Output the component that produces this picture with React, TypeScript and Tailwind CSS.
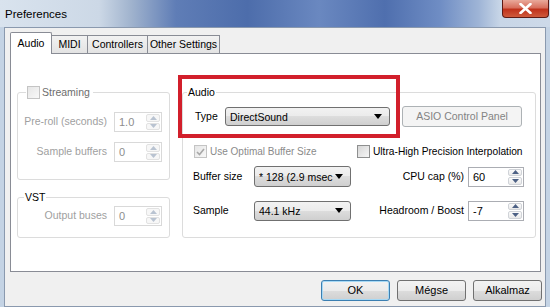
import React from "react";

const SEG = "font-['Liberation_Sans','Arial',sans-serif]";
const TAH = "font-['Liberation_Sans','Arial',sans-serif]";

function UpTri({ color }: { color: string }) {
  return (
    <svg width="7" height="4" viewBox="0 0 7 4">
      <path d="M0 4 L3.5 0 L7 4 Z" fill={color} />
    </svg>
  );
}
function DownTri({ color }: { color: string }) {
  return (
    <svg width="7" height="4" viewBox="0 0 7 4">
      <path d="M0 0 L3.5 4 L7 0 Z" fill={color} />
    </svg>
  );
}

function SpinBox({
  value,
  disabled,
  w,
}: {
  value: string;
  disabled?: boolean;
  w: string;
}) {
  const arrow = disabled ? "#b9c3d1" : "#4d6185";
  return (
    <div
      className={`flex shrink-0 h-[20px] ${w} bg-white border ${
        disabled ? "border-[#d9d9d9]" : "border-[#abadb3]"
      }`}
    >
      <div
        className={`flex-1 pl-[4px] text-[11px] leading-[18px] ${SEG} ${
          disabled ? "text-[#8d8d8d]" : "text-[#000]"
        }`}
      >
        {value}
      </div>
      <div className="flex flex-col w-[16px] p-[1px] gap-[1px]">
        <div
          className={`flex-1 flex items-center justify-center rounded-[2px] border ${
            disabled
              ? "border-[#e2e2e2] bg-[#f7f7f7]"
              : "border-[#d0d3d8] bg-gradient-to-b from-[#fbfbfb] to-[#eaeaea]"
          }`}
        >
          <UpTri color={arrow} />
        </div>
        <div
          className={`flex-1 flex items-center justify-center rounded-[2px] border ${
            disabled
              ? "border-[#e2e2e2] bg-[#f7f7f7]"
              : "border-[#d0d3d8] bg-gradient-to-b from-[#fbfbfb] to-[#eaeaea]"
          }`}
        >
          <DownTri color={arrow} />
        </div>
      </div>
    </div>
  );
}

function Combo({ value, w, h }: { value: string; w: string; h: string }) {
  return (
    <div
      className={`flex shrink-0 items-center ${w} ${h} rounded-[3px] border border-[#707070] bg-[linear-gradient(to_bottom,#f2f2f2_0%,#ebebeb_50%,#dddddd_50%,#cfcfcf_100%)] pl-[4px] pr-[7px] overflow-hidden`}
    >
      <span
        className={`flex-1 whitespace-nowrap overflow-hidden text-[10.5px] leading-[14px] text-black ${SEG}`}
      >
        {value}
      </span>
      <svg width="8" height="5" viewBox="0 0 8 5" className="shrink-0 ml-[2px]">
        <path d="M0 0 L8 0 L4 5 Z" fill="#000" />
      </svg>
    </div>
  );
}

function CheckBox({ checked, disabled }: { checked?: boolean; disabled?: boolean }) {
  return (
    <div
      className={`w-[13px] h-[13px] shrink-0 border flex items-center justify-center ${
        disabled
          ? "border-[#c4c4c4] bg-[linear-gradient(135deg,#e6e6e6,#f8f8f8)]"
          : "border-[#8e8f8f] bg-[linear-gradient(135deg,#d6d6d6,#f6f6f6)]"
      }`}
    >
      {checked && (
        <svg width="9" height="8" viewBox="0 0 9 8">
          <path d="M1 4 L3.5 6.5 L8 1" stroke="#a8a8a8" strokeWidth="1.6" fill="none" />
        </svg>
      )}
    </div>
  );
}

function Button({
  label,
  w,
  focused,
}: {
  label: string;
  w: string;
  focused?: boolean;
}) {
  return (
    <div
      className={`flex shrink-0 items-center justify-center ${w} h-[21px] rounded-[3px] border ${
        focused ? "border-[#3c7fb1] shadow-[inset_0_0_0_1px_#a7d9f5]" : "border-[#707070]"
      } bg-[linear-gradient(to_bottom,#f2f2f2_0%,#ebebeb_50%,#dddddd_50%,#cfcfcf_100%)] text-[11px] text-black ${SEG}`}
    >
      {label}
    </div>
  );
}

export default function App() {
  return (
    <div className="w-[550px] h-[307px] overflow-hidden flex flex-col bg-[#c4d3e4] relative">
      {/* Title bar */}
      <div className="h-[27px] shrink-0 flex items-start bg-[linear-gradient(to_right,#d9e3ee_0%,#ccd8e6_18%,#9fb2cd_24%,#5f7db6_32%,#4d6dab_45%,#6a88c0_58%,#4f6fae_70%,#6f8dc4_80%,#9eb4d6_87%,#c8d6e7_91%,#cdd9e8_100%)]">
        <div className={`pl-[5px] pt-[7px] text-[11.5px] leading-[14px] text-black ${SEG} flex-1`}>
          Preferences
        </div>
        <div className="w-[47px] h-[18px] mr-[1px] rounded-b-[4px] border border-[#5e1a14] border-t-0 bg-[linear-gradient(to_bottom,#e9a99b_0%,#d8705e_45%,#c0321c_55%,#cf5a3c_100%)] flex items-center justify-center">
          <svg width="13" height="11" viewBox="0 0 13 11">
            <path
              d="M1.5 1 L11.5 10 M11.5 1 L1.5 10"
              stroke="#fff"
              strokeWidth="2.6"
              strokeLinecap="round"
            />
          </svg>
        </div>
      </div>

      {/* Client area */}
      <div className="flex-1 mx-[4px] bg-[#f0f0f0] border border-[#8a99ae] flex flex-col pl-[5px] pr-[3px] pt-[5px]">
        {/* Tabs */}
        <div className={`flex items-end h-[21px] text-[10.5px] text-black ${TAH} relative z-10`}>
          <div className="h-[22px] w-[42px] bg-white border border-[#898c95] border-b-0 flex items-start justify-center pt-[3px] rounded-t-[2px]">
            Audio
          </div>
          <div className="h-[19px] w-[36px] bg-[linear-gradient(to_bottom,#f2f2f2,#e3e3e3)] border border-[#898c95] border-l-0 flex items-center justify-center">
            MIDI
          </div>
          <div className="h-[19px] w-[60px] bg-[linear-gradient(to_bottom,#f2f2f2,#e3e3e3)] border border-[#898c95] border-l-0 flex items-center justify-center">
            Controllers
          </div>
          <div className="h-[19px] w-[72px] bg-[linear-gradient(to_bottom,#f2f2f2,#e3e3e3)] border border-[#898c95] border-l-0 flex items-center justify-center">
            Other Settings
          </div>
        </div>

        {/* Tab panel */}
        <div className="w-[531px] h-[219px] shrink-0 -mt-[1px] bg-white border border-[#898c95] flex pl-[6px] pt-[31px] gap-[12px]">
          {/* Left column */}
          <div className="w-[153px] shrink-0 flex flex-col gap-[10px]">
            <fieldset className="border border-[#dcdcdc] rounded-[3px] px-0 pt-[13px] pb-[17px] m-0 min-w-0">
              <legend className="ml-[8px] px-[1px] flex items-center gap-[2px] h-[14px]">
                <CheckBox disabled />
                <span className={`text-[10.5px] leading-[14px] text-[#6d6d6d] ${TAH} pr-[2px]`}>
                  Streaming
                </span>
              </legend>
              <div className="flex flex-col gap-[10px] pr-[7px]">
                <div className="flex items-center justify-end gap-[7px]">
                  <span className={`text-[10.5px] text-[#a0a0a0] ${SEG} whitespace-nowrap`}>
                    Pre-roll (seconds)
                  </span>
                  <SpinBox value="1.0" disabled w="w-[48px]" />
                </div>
                <div className="flex items-center justify-end gap-[7px]">
                  <span className={`text-[10.5px] text-[#a0a0a0] ${SEG} whitespace-nowrap`}>
                    Sample buffers
                  </span>
                  <SpinBox value="0" disabled w="w-[48px]" />
                </div>
              </div>
            </fieldset>
            <fieldset className="border border-[#dcdcdc] rounded-[3px] pt-[2px] pb-[11px] m-0 min-w-0">
              <legend className={`ml-[6px] px-[1px] text-[10.5px] leading-[14px] text-black ${TAH}`}>
                VST
              </legend>
              <div className="flex items-center justify-end gap-[7px] pr-[7px]">
                <span className={`text-[10.5px] text-[#a0a0a0] ${SEG} whitespace-nowrap`}>
                  Output buses
                </span>
                <SpinBox value="0" disabled w="w-[48px]" />
              </div>
            </fieldset>
          </div>

          {/* Right group */}
          <fieldset className="w-[354px] h-[153px] shrink-0 min-w-0 border border-[#dcdcdc] rounded-[3px] pt-[7px] px-0 m-0">
            <legend className={`ml-[4px] px-[1px] text-[10.5px] leading-[14px] text-black ${TAH}`}>
              Audio
            </legend>
            <div className="flex flex-col pl-[10px] pr-[11px]">
              <div className="flex items-center h-[21px]">
                <span className={`w-[32px] shrink-0 pl-[2px] text-[10.5px] text-black ${SEG}`}>
                  Type
                </span>
                <Combo value="DirectSound" w="w-[165px]" h="h-[19px]" />
                <div
                  className={`ml-[12px] shrink-0 w-[120px] h-[21px] rounded-[3px] border border-[#adb2b5] bg-[#f4f4f4] flex items-center justify-center text-[10.5px] text-[#838383] ${SEG}`}
                >
                  ASIO Control Panel
                </div>
              </div>
              <div className="flex items-center h-[13px] mt-[18px]">
                <div className="w-[164px] shrink-0 flex items-center gap-[3px] pl-[1px]">
                  <CheckBox checked disabled />
                  <span className={`text-[10px] text-[#8a8a8a] ${SEG} whitespace-nowrap`}>
                    Use Optimal Buffer Size
                  </span>
                </div>
                <div className="flex items-center gap-[3px]">
                  <CheckBox />
                  <span className={`text-[10.2px] text-black ${SEG} whitespace-nowrap`}>
                    Ultra-High Precision Interpolation
                  </span>
                </div>
              </div>
              <div className="flex items-center h-[21px] mt-[8px]">
                <span className={`w-[61px] shrink-0 text-[10.5px] text-black ${SEG}`}>
                  Buffer size
                </span>
                <Combo value="* 128 (2.9 msec" w="w-[97px]" h="h-[21px]" />
                <span
                  className={`flex-1 text-right pr-[4px] text-[10.5px] text-black ${SEG} whitespace-nowrap`}
                >
                  CPU cap (%)
                </span>
                <SpinBox value="60" w="w-[56px]" />
              </div>
              <div className="flex items-center h-[21px] mt-[13px]">
                <span className={`w-[61px] shrink-0 text-[10.5px] text-black ${SEG}`}>Sample</span>
                <Combo value="44.1 kHz" w="w-[97px]" h="h-[20px]" />
                <span
                  className={`flex-1 text-right pr-[4px] text-[10.5px] text-black ${SEG} whitespace-nowrap`}
                >
                  Headroom / Boost
                </span>
                <SpinBox value="-7" w="w-[56px]" />
              </div>
            </div>
          </fieldset>
        </div>

        {/* Buttons */}
        <div className="flex justify-end gap-[7px] mt-[8px]">
          <Button label="OK" w="w-[69px]" focused />
          <Button label="Mégse" w="w-[69px]" />
          <Button label="Alkalmaz" w="w-[69px]" />
        </div>
      </div>

      {/* Red annotation rectangle */}
      <div className="absolute left-[178px] top-[75px] w-[222px] h-[63px] border-[4px] border-[#d21f2b] pointer-events-none" />
    </div>
  );
}
